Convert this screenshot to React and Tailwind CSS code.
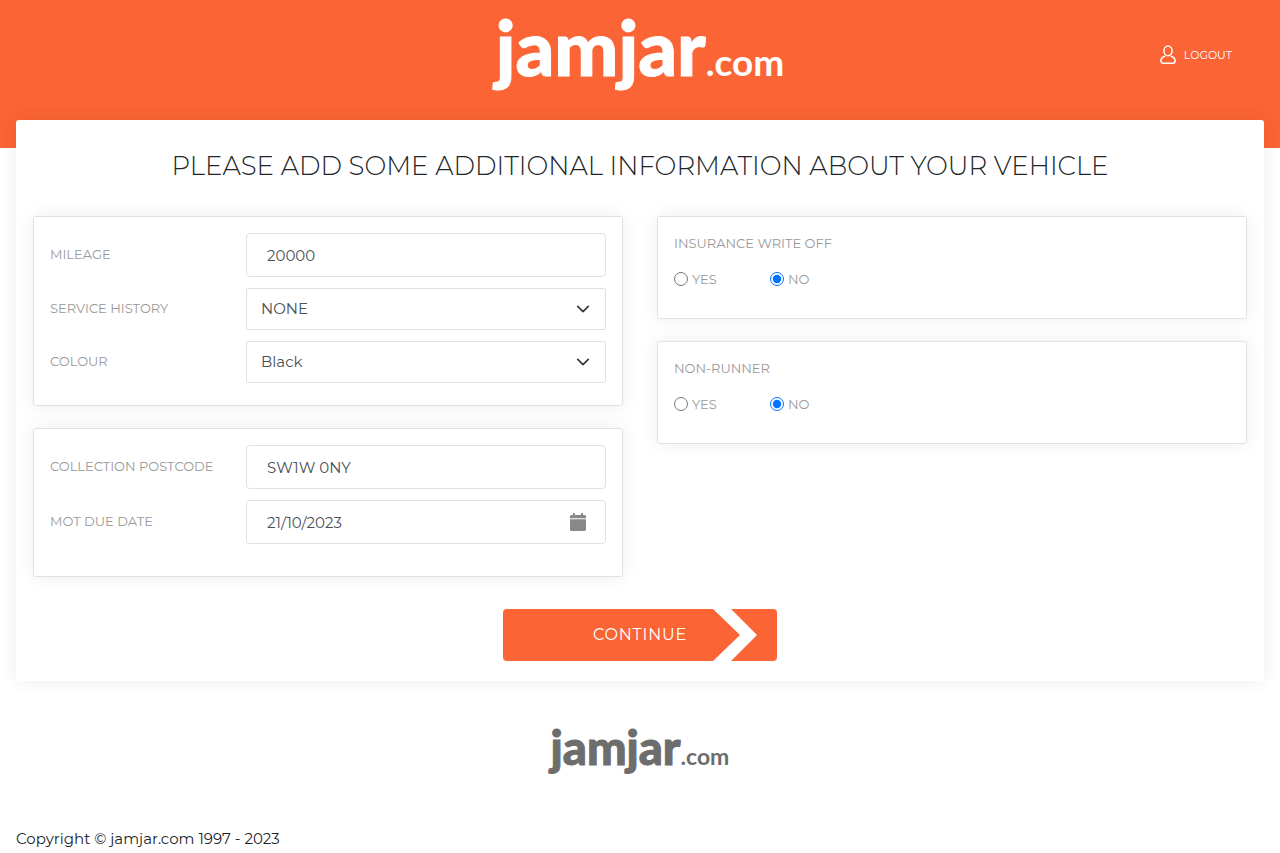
import React, { useState } from 'react';

const Logo = ({ className, mainClass, suffixClass }) => (
  <a href="/" aria-label="jamjar.com" className={`flex items-baseline whitespace-nowrap font-['Lato','Open_Sans',sans-serif] ${className}`}>
    <span className={`font-black ${mainClass}`}>jamjar</span>
    <span className={`font-bold ${suffixClass}`}>.com</span>
  </a>
);

const UserIcon = () => (
  <svg width="16" height="20" viewBox="0 0 16 20" fill="none" stroke="currentColor" strokeWidth="1.5" aria-hidden="true">
    <ellipse cx="8" cy="5.9" rx="4.1" ry="4.9" />
    <path d="M5.200 11.300C2.200 12 .9 14 .9 16c0 1.800 1.100 2.300 2.400 2.300h9.400c1.300 0 2.400-.5 2.400-2.300 0-2-1.300-4-4.300-4.700" />
  </svg>
);

const ChevronIcon = () => (
  <svg width="14" height="14" viewBox="0 0 16 16" fill="none" stroke="currentColor" strokeWidth="2" strokeLinecap="round" strokeLinejoin="round" aria-hidden="true" className="pointer-events-none absolute top-1/2 right-4 -translate-y-1/2 text-[#343a40]">
    <path d="m2 5 6 6 6-6" />
  </svg>
);

const CalendarIcon = () => (
  <svg width="16" height="18" viewBox="0 0 16 18" fill="currentColor" aria-hidden="true" className="pointer-events-none absolute top-1/2 right-5 -translate-y-1/2 text-[#888888]">
    <path d="M0 5.200V3.600C0 2.700.6 2 1.500 2H3V.5c0-.3.200-.5.500-.5h1c.3 0 .5.200.5.500V2h6V.5c0-.3.200-.5.500-.5h1c.3 0 .5.200.5.500V2h1.500c.9 0 1.500.7 1.500 1.600v1.600zM0 6.300h16v10c0 1-.6 1.700-1.500 1.700h-13C.6 18 0 17.300 0 16.300z" />
  </svg>
);

const Panel = ({ className, children }) => (
  <section className={`rounded-[3px] border border-[#dee2e6] bg-white px-4 pt-4 shadow-[0_0_18px_rgba(0,0,0,0.08)] ${className}`}>
    {children}
  </section>
);

const Field = ({ id, label, children }) => (
  <div className="grid grid-cols-[196px_1fr] items-center">
    <label htmlFor={id} className="text-[13px] text-[#999999] uppercase">{label}</label>
    <div className="relative">{children}</div>
  </div>
);

const inputClass = 'block h-11 w-full rounded border border-[#dee2e6] bg-white px-5 text-[15px] text-[#495057] outline-none';
const selectClass = 'block h-[42px] w-full appearance-none rounded-[2px] border border-[#dee2e6] bg-white px-3.5 text-[15px] text-[#495057] outline-none';

const YesNo = ({ name, label, value, onChange }) => (
  <Panel className="pb-[29px]">
    <fieldset>
      <legend className="text-[13px] leading-5 text-[#999999] uppercase">{label}</legend>
      <div className="mt-4 flex">
        {['Yes', 'No'].map((option) => (
          <label key={option} className="flex w-24 items-center gap-1 text-[13px] leading-5 text-[#999999] uppercase">
            <input
              type="radio"
              name={name}
              checked={value === option}
              onChange={() => onChange(option)}
              className="size-3.5 accent-[#0075ff]"
            />
            {option}
          </label>
        ))}
      </div>
    </fieldset>
  </Panel>
);

const App = () => {
  const [form, setForm] = useState({
    mileage: '20000',
    serviceHistory: 'NONE',
    colour: 'Black',
    postcode: 'SW1W 0NY',
    motDate: '21/10/2023',
    writeOff: 'No',
    nonRunner: 'No',
  });

  const update = (key, value) => setForm({ ...form, [key]: value });

  return (
    <div className="min-h-screen bg-white font-['Montserrat','Inter',sans-serif] text-[#212529]">
      <header className="grid h-[148px] grid-cols-[1fr_auto_1fr] items-start bg-[#fb6434] px-12 text-white">
        <Logo className="col-start-2" mainClass="text-[76px] leading-[94px] [-webkit-text-stroke:1px_currentColor]" suffixClass="text-[37px]" />
        <a href="/logout" className="mt-[45px] flex items-center gap-2 justify-self-end text-[11px] leading-5">
          <UserIcon />
          LOGOUT
        </a>
      </header>

      <main className="relative mx-4 -mt-7 rounded-[3px] bg-white px-[17px] pt-7 pb-5 shadow-[0_0_18px_rgba(0,0,0,0.08)]">
        <h1 className="text-center text-[26px] leading-9 font-[350]">
          PLEASE ADD SOME ADDITIONAL INFORMATION ABOUT YOUR VEHICLE
        </h1>

        <form onSubmit={(e) => e.preventDefault()}>
          <div className="mt-8 grid grid-cols-2 items-start gap-x-[34px]">
            <div className="flex flex-col gap-[22px]">
              <Panel className="flex flex-col gap-[11px] pb-[22px]">
                <Field id="mileage" label="Mileage">
                  <input id="mileage" type="text" value={form.mileage} onChange={(e) => update('mileage', e.target.value)} className={inputClass} />
                </Field>
                <Field id="service" label="Service history">
                  <select id="service" value={form.serviceHistory} onChange={(e) => update('serviceHistory', e.target.value)} className={selectClass}>
                    <option>NONE</option>
                    <option>PART</option>
                    <option>FULL</option>
                  </select>
                  <ChevronIcon />
                </Field>
                <Field id="colour" label="Colour">
                  <select id="colour" value={form.colour} onChange={(e) => update('colour', e.target.value)} className={selectClass}>
                    <option>Black</option>
                    <option>Blue</option>
                    <option>White</option>
                  </select>
                  <ChevronIcon />
                </Field>
              </Panel>

              <Panel className="flex flex-col gap-[11px] pb-8">
                <Field id="postcode" label="Collection postcode">
                  <input id="postcode" type="text" value={form.postcode} onChange={(e) => update('postcode', e.target.value)} className={inputClass} />
                </Field>
                <Field id="mot" label="MOT due date">
                  <input id="mot" type="text" value={form.motDate} onChange={(e) => update('motDate', e.target.value)} className={inputClass} />
                  <CalendarIcon />
                </Field>
              </Panel>
            </div>

            <div className="flex flex-col gap-[22px]">
              <YesNo name="writeOff" label="Insurance write off" value={form.writeOff} onChange={(v) => update('writeOff', v)} />
              <YesNo name="nonRunner" label="Non-runner" value={form.nonRunner} onChange={(v) => update('nonRunner', v)} />
            </div>
          </div>

          <button type="submit" className="mx-auto mt-8 grid h-[52px] w-[274px] grid-cols-[64px_1fr_64px] items-center overflow-hidden rounded bg-[#fb6434] text-base tracking-wider text-white">
            <span className="col-start-2">CONTINUE</span>
            <svg width="64" height="52" viewBox="0 0 64 52" fill="currentColor" aria-hidden="true">
              <path d="M0 0h18l26 26-26 26H0l27-26z" />
            </svg>
          </button>
        </form>
      </main>

      <footer className="pt-9">
        <Logo className="justify-center text-[#6d6d6d]" mainClass="text-[47px] leading-[60px] [-webkit-text-stroke:1px_currentColor]" suffixClass="text-[23px]" />
        <p className="mt-[50px] px-4 text-[15px] leading-6">Copyright © jamjar.com 1997 - 2023</p>
      </footer>
    </div>
  );
};

export default App;
